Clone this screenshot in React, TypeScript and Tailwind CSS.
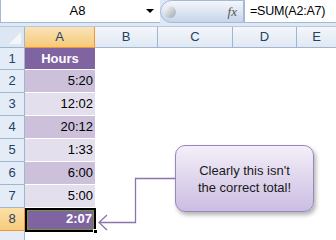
import React from 'react';

const rows = [
  { n: 1, v: 'Hours' },
  { n: 2, v: '5:20' },
  { n: 3, v: '12:02' },
  { n: 4, v: '20:12' },
  { n: 5, v: '1:33' },
  { n: 6, v: '6:00' },
  { n: 7, v: '5:00' },
  { n: 8, v: '2:07' },
];

function cellClass(n: number) {
  if (n === 1) return 'bg-[#8064a2] text-white font-bold justify-center';
  if (n === 8) return 'bg-[#8064a2] text-white font-bold justify-end pr-[3px]';
  if (n % 2 === 0) return 'bg-[#ccc0da] text-black justify-end pr-[2px]';
  return 'bg-[#e4dfec] text-black justify-end pr-[2px]';
}

export default function App() {
  return (
    <div
      className="relative w-[336px] h-[240px] overflow-hidden bg-white text-[13px]"
      style={{ fontFamily: '"Liberation Sans", Arial, sans-serif' }}
    >
      {/* formula bar */}
      <div className="flex h-[27px] bg-[#dfe8f5] border-b border-[#b7c8de]">
        <div className="flex shrink-0 items-center w-[160px] h-[23px] bg-white border-l border-b border-[#a3b9d6]">
          <span className="flex-1 text-center pl-[8px] text-black">A8</span>
          <span className="mr-[6px] w-0 h-0 border-l-[4px] border-r-[4px] border-t-[4px] border-l-transparent border-r-transparent border-t-black" />
        </div>
        <div className="flex shrink-0 items-center w-[84px] h-[23px] rounded-l-full bg-gradient-to-b from-[#f4f7fb] to-[#c6d5ea] border border-[#a3b9d6]">
          <span className="ml-[3px] w-[12px] h-[12px] rounded-full bg-gradient-to-br from-[#ffffff] to-[#9ea6b0]" />
          <span
            className="ml-auto mr-[6px] italic text-[#555] text-[13px]"
            style={{ fontFamily: '"Liberation Serif", serif' }}
          >
            fx
          </span>
        </div>
        <div className="flex items-center flex-1 min-w-0 h-[23px] bg-white border-b border-l border-[#a3b9d6] pl-[5px] text-black text-[12.5px] tracking-[-0.2px] whitespace-nowrap">
          =SUM(A2:A7)
        </div>
      </div>

      {/* column headers */}
      <div className="flex h-[21px] text-[#27415f]">
        <div className="relative w-[25px] bg-[#dde7f3] border-r border-b border-[#9eb6ce]">
          <svg className="absolute right-[3px] bottom-[3px]" width="12" height="12" viewBox="0 0 12 12">
            <polygon points="12,0 12,12 0,12" fill="#f4f6f9" />
          </svg>
        </div>
        <div className="flex items-center justify-center w-[70px] bg-gradient-to-b from-[#f9e3b7] to-[#f6c977] border-r border-b border-[#f29536]">
          A
        </div>
        <div className="flex items-center justify-center w-[63px] bg-gradient-to-b from-[#f4f7fb] to-[#e0e8f3] border-r border-b border-[#9eb6ce]">
          B
        </div>
        <div className="flex items-center justify-center w-[75px] bg-gradient-to-b from-[#f4f7fb] to-[#e0e8f3] border-r border-b border-[#9eb6ce]">
          C
        </div>
        <div className="flex items-center justify-center w-[64px] bg-gradient-to-b from-[#f4f7fb] to-[#e0e8f3] border-r border-b border-[#9eb6ce]">
          D
        </div>
        <div className="flex items-center justify-center flex-1 bg-gradient-to-b from-[#f4f7fb] to-[#e0e8f3] border-b border-[#9eb6ce]">
          E
        </div>
      </div>

      {/* rows */}
      {rows.map((r) => (
        <div key={r.n} className={`flex ${r.n === 1 ? 'h-[22px]' : 'h-[23px]'}`}>
          <div
            className={`flex items-center justify-center w-[25px] border-r border-b ${
              r.n === 8
                ? 'bg-gradient-to-b from-[#fbe0a8] to-[#f7cb7b] border-[#f29536] text-[#27415f]'
                : 'bg-[#e4ecf7] border-[#9eb6ce] text-[#27415f]'
            }`}
          >
            {r.n}
          </div>
          <div className="w-[70px] border-b border-white">
            <div className={`flex items-center h-full ${cellClass(r.n)}`}>{r.v}</div>
          </div>
        </div>
      ))}
      <div className="flex h-[10px]">
        <div className="w-[25px] bg-[#e4ecf7] border-r border-[#9eb6ce]" />
      </div>

      {/* selection around A8 */}
      <div className="absolute left-[25px] top-[208px] w-[71px] h-[24px] border-2 border-black">
        <div className="w-full h-full border border-[#77933c]" />
        <div className="absolute right-[-4px] bottom-[-4px] w-[5px] h-[5px] bg-black border border-white" />
      </div>

      {/* connector */}
      <svg className="absolute left-0 top-0" width="336" height="240" viewBox="0 0 336 240">
        <polyline points="175,178.5 135.5,178.5 135.5,222.5 99,222.5" fill="none" stroke="#8a76ad" strokeWidth="1.3" />
        <polyline points="107,215 99,222.5 107,230" fill="none" stroke="#8a76ad" strokeWidth="1.3" />
      </svg>

      {/* callout */}
      <div className="absolute left-[175px] top-[145px] w-[139px] h-[67px] rounded-[10px] border border-[#9a86bd] bg-gradient-to-b from-[#f3eff8] to-[#cbbde2] shadow-[2px_3px_4px_rgba(0,0,0,0.3)] flex flex-col items-center justify-center text-[#1a1a1a] leading-[17px]">
        <span>Clearly this isn't</span>
        <span>the correct total!</span>
      </div>
    </div>
  );
}
